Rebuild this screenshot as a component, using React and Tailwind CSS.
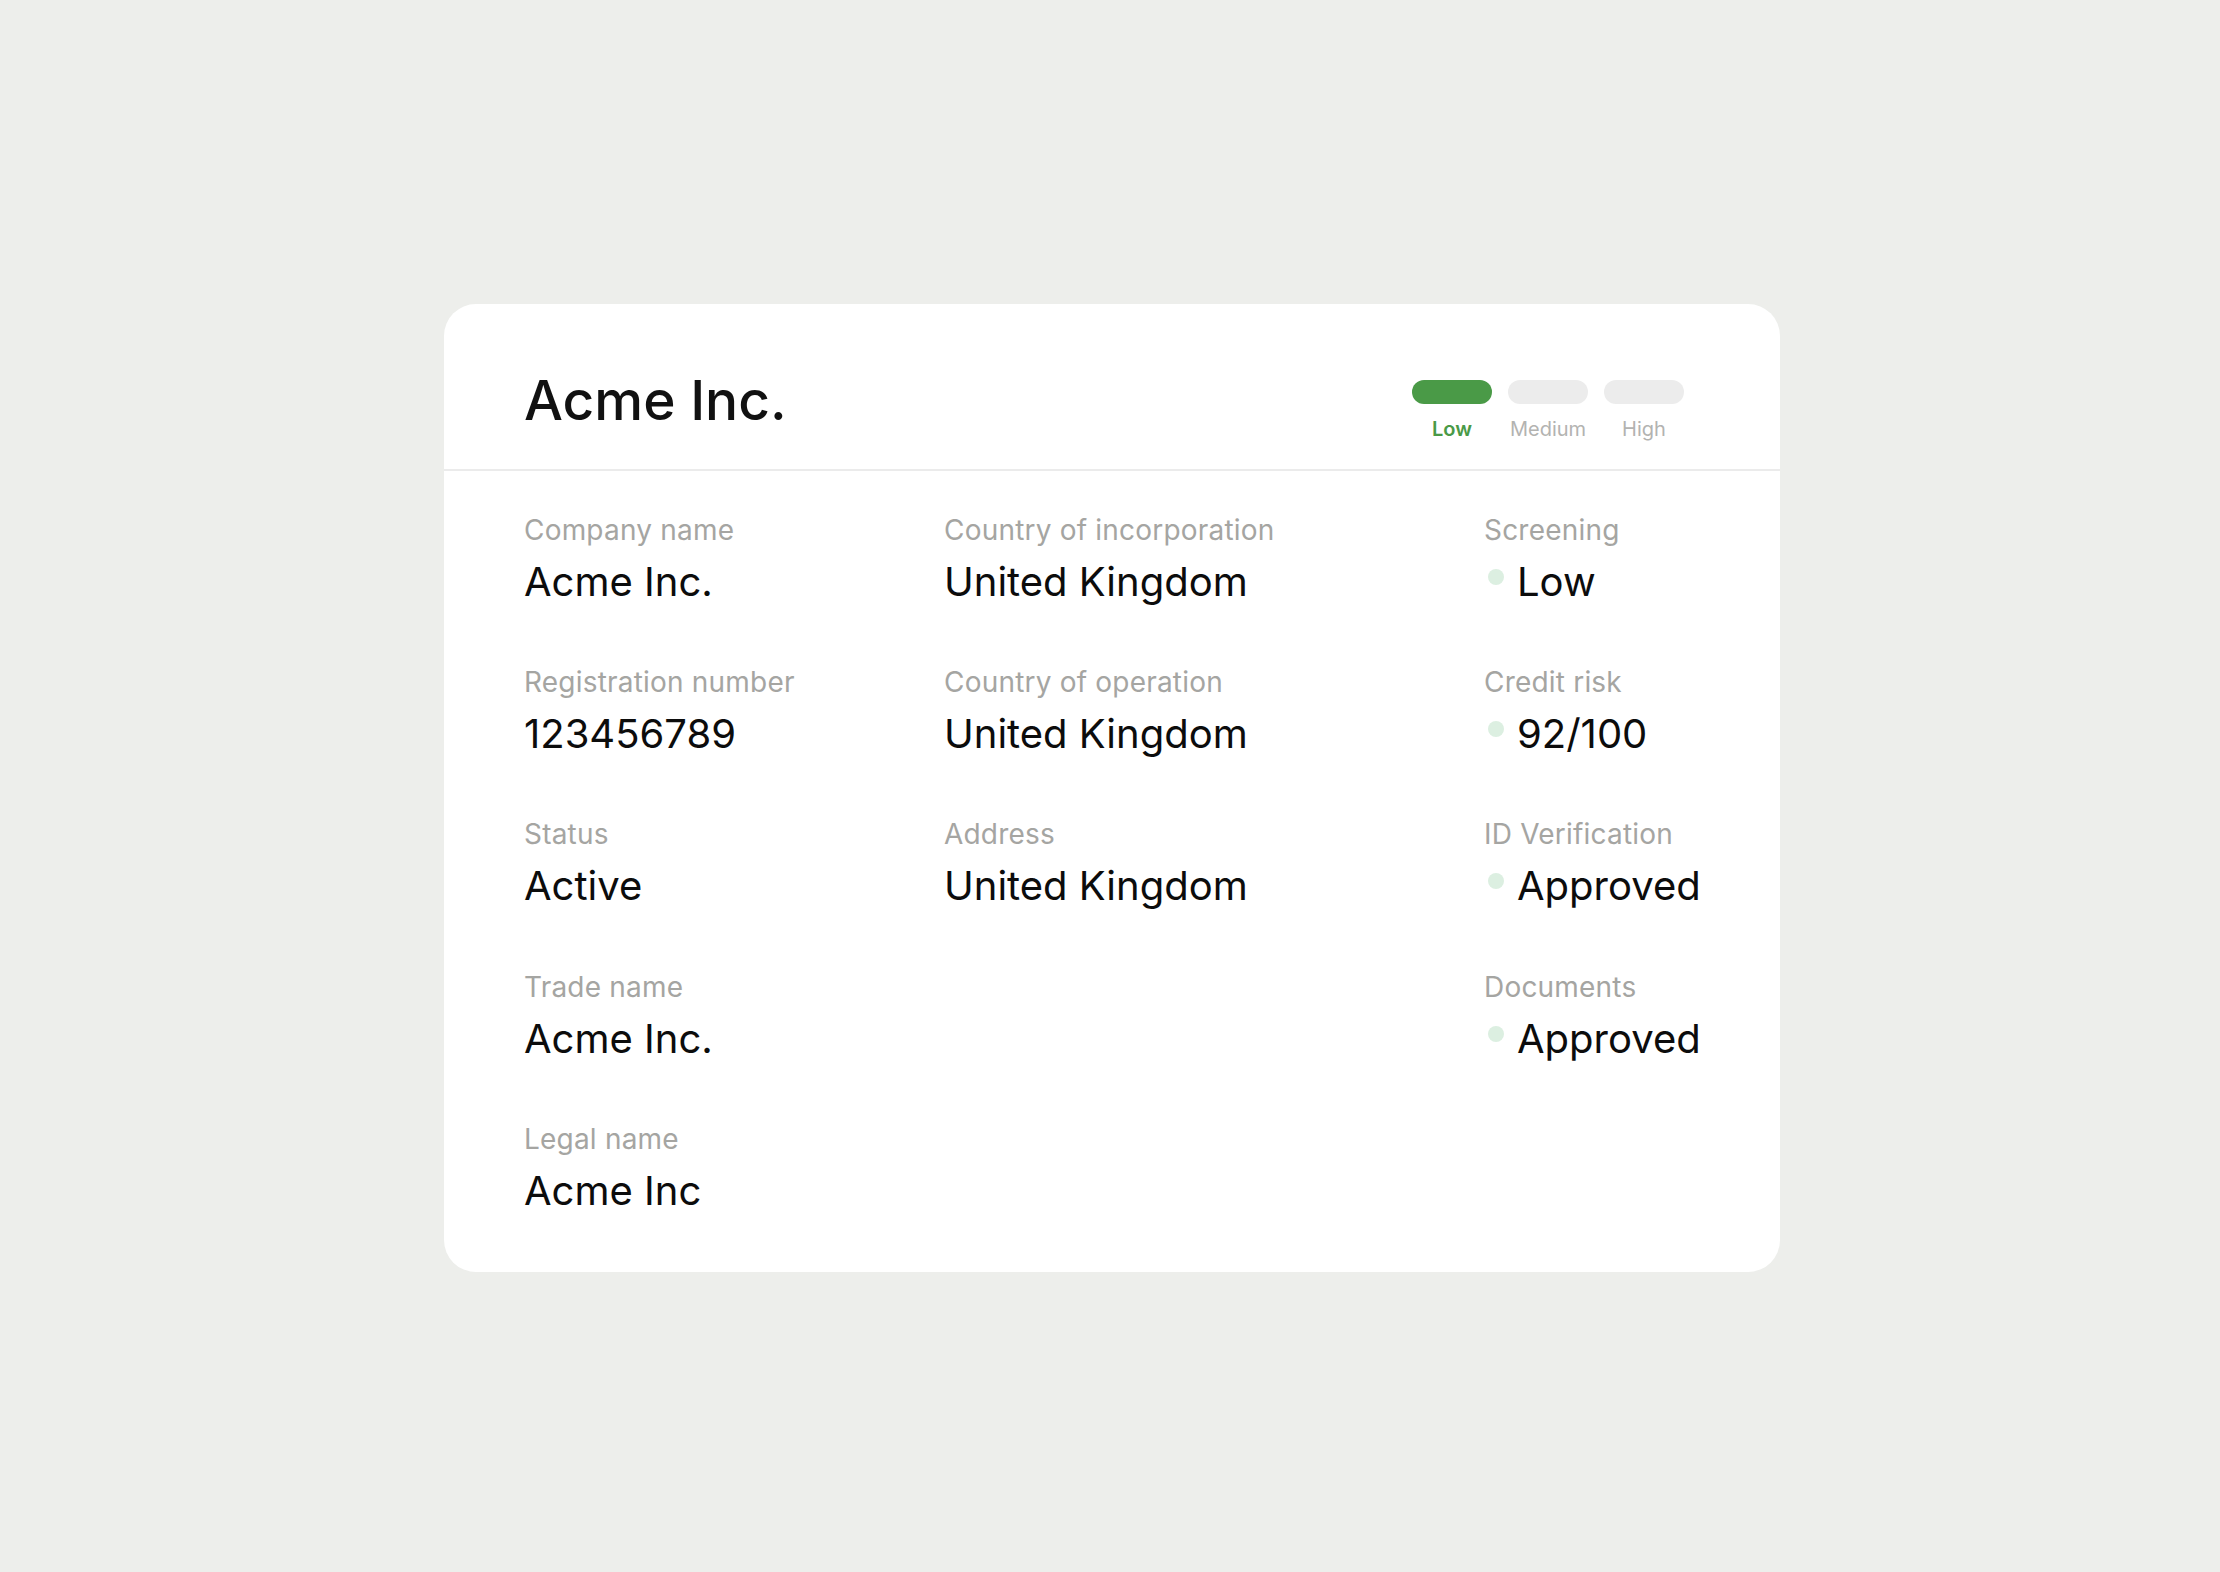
const leftFields = [
  { label: "Company name", value: "Acme Inc." },
  { label: "Registration number", value: "123456789" },
  { label: "Status", value: "Active" },
  { label: "Trade name", value: "Acme Inc." },
  { label: "Legal name", value: "Acme Inc" },
];

const midFields = [
  { label: "Country of incorporation", value: "United Kingdom" },
  { label: "Country of operation", value: "United Kingdom" },
  { label: "Address", value: "United Kingdom" },
];

const rightFields = [
  { label: "Screening", value: "Low" },
  { label: "Credit risk", value: "92/100" },
  { label: "ID Verification", value: "Approved" },
  { label: "Documents", value: "Approved" },
];

const Field = ({ label, value, dot }) => (
  <div>
    <div className="text-[28px] leading-[36px] tracking-[0.2px] text-[#a5a5a2]">{label}</div>
    <div className="mt-[10px] flex items-start">
      {dot && (
        <span className="mt-[11px] ml-1 mr-[13px] h-4 w-4 shrink-0 rounded-full bg-[#dcefe1]" />
      )}
      <span className="text-[40px] leading-[48px] text-[#0c0c0c]">{value}</span>
    </div>
  </div>
);

const RiskScale = () => {
  const levels = ["Low", "Medium", "High"];
  return (
    <div className="mt-2 flex gap-4">
      {levels.map((lvl, i) => (
        <div key={lvl} className="flex w-20 flex-col items-center">
          <div
            className={
              i === 0
                ? "h-6 w-20 rounded-full bg-[#4a9a47]"
                : "h-6 w-20 rounded-full bg-[#ececec]"
            }
          />
          <div
            className={
              i === 0
                ? "mt-[13px] text-[20px] leading-[24px] font-semibold text-[#4a9a47]"
                : "mt-[13px] text-[20px] leading-[24px] text-[#b3b3b1]"
            }
          >
            {lvl}
          </div>
        </div>
      ))}
    </div>
  );
};

export default function App() {
  return (
    <div
      className="flex min-h-screen w-full items-start justify-center bg-[#edeeeb] pl-[4px] pt-[304px]"
      style={{ fontFamily: "Inter, 'Noto Sans', sans-serif" }}
    >
      <div className="w-[1336px] rounded-[32px] bg-white">
        <div className="flex h-[167px] items-start justify-between border-b-2 border-[#ebebeb] pl-[80px] pr-[96px] pt-[68px]">
          <h1 className="text-[55px] leading-[56px] font-medium text-[#111111]">Acme Inc.</h1>
          <RiskScale />
        </div>

        <div className="grid grid-cols-[420px_540px_1fr] pl-[80px] pt-[41px] pb-[57px]">
          <div className="flex flex-col gap-y-[58.2px]">
            {leftFields.map((f) => (
              <Field key={f.label} {...f} />
            ))}
          </div>
          <div className="flex flex-col gap-y-[58.2px]">
            {midFields.map((f) => (
              <Field key={f.label} {...f} />
            ))}
          </div>
          <div className="flex flex-col gap-y-[58.2px]">
            {rightFields.map((f) => (
              <Field key={f.label} {...f} dot />
            ))}
          </div>
        </div>
      </div>
    </div>
  );
}
